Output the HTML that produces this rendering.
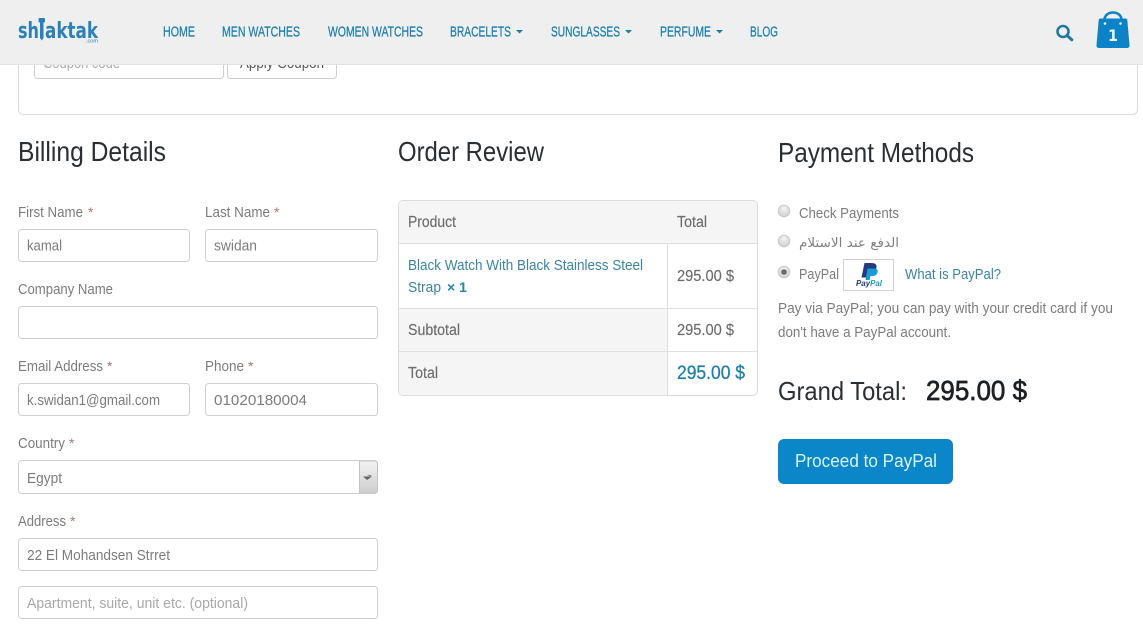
<!DOCTYPE html>
<html lang="en"><head><meta charset="utf-8"><title>Checkout</title>
<style>
html,body{margin:0;padding:0;background:#fff;width:1143px;height:625px;overflow:hidden}
svg{display:block}
text{font-family:"Liberation Sans","DejaVu Sans",sans-serif;fill:#777;font-size:14px}
.nav{fill:#1a7fb0;font-size:14.5px;stroke:#1a7fb0;stroke-width:.25px}
.h{fill:#2a2f33;font-size:28px}
.lab{fill:#7c7c7c;font-size:15px}
.val{fill:#7c7c7c;font-size:15px}
.req{fill:#a77;font-size:14px}
.inp{fill:#fff;stroke:#d0d0d0;stroke-width:1}
.tb{fill:#6c6c6c;font-size:15.500px;stroke:#6c6c6c;stroke-width:.15px}
.ln{stroke:#e0e0e0;stroke-width:1}
.blue{fill:#3a84a6;font-size:15px}
</style></head><body>
<svg width="1143" height="625" viewBox="0 0 1143 625" xmlns="http://www.w3.org/2000/svg">
<defs>
<linearGradient id="sel" x1="0" y1="0" x2="0" y2="1"><stop offset="0" stop-color="#f3f3f3"/><stop offset="1" stop-color="#cdcdcd"/></linearGradient>
<radialGradient id="rad" cx=".5" cy=".3" r=".75"><stop offset="0" stop-color="#f4f4f4"/><stop offset="1" stop-color="#cbcbcb"/></radialGradient>
</defs>
<rect width="1143" height="625" fill="#fff"/>

<!-- coupon panel -->
<rect x="18.500" y="40" width="1119" height="74.500" rx="5" fill="#fff" stroke="#dcdcdc"/>
<rect x="34.500" y="40" width="189" height="38.500" rx="3" class="inp"/>
<rect x="227.500" y="40" width="109" height="38.500" rx="3" class="inp"/>
<text x="43" y="68" textLength="77" lengthAdjust="spacingAndGlyphs" style="fill:#aaa;font-size:15px">Coupon code</text>
<text x="240" y="68" textLength="84" lengthAdjust="spacingAndGlyphs" style="fill:#555;font-size:15px">Apply Coupon</text>

<!-- header -->
<rect width="1143" height="64.500" fill="#efefef"/>
<rect y="64" width="1143" height="1" fill="#e4e4e4"/>
<g style="font-family:'DejaVu Sans',sans-serif">
<text x="18" y="38" textLength="21" lengthAdjust="spacingAndGlyphs" style="fill:#2b80ba;font-size:22px;font-weight:bold;font-family:'DejaVu Sans',sans-serif">sh</text>
<text x="45" y="38" textLength="53" lengthAdjust="spacingAndGlyphs" style="fill:#2b80ba;font-size:22px;font-weight:bold;font-family:'DejaVu Sans',sans-serif">aktak</text>
</g>
<rect x="38.500" y="18" width="6.500" height="4.500" rx="1" fill="#2b80ba"/>
<path d="M40 22.500h3.500V38l-1.700 2.500L40 38z" fill="#2b80ba"/>
<text x="86" y="42.500" textLength="12" lengthAdjust="spacingAndGlyphs" style="fill:#2b80ba;font-size:5px">.com</text>
<text class="nav" x="163" y="36.500" textLength="32" lengthAdjust="spacingAndGlyphs">HOME</text>
<text class="nav" x="222" y="36.500" textLength="78" lengthAdjust="spacingAndGlyphs">MEN WATCHES</text>
<text class="nav" x="328" y="36.500" textLength="95" lengthAdjust="spacingAndGlyphs">WOMEN WATCHES</text>
<text class="nav" x="450" y="36.500" textLength="61" lengthAdjust="spacingAndGlyphs">BRACELETS</text>
<path d="M516 30h7l-3.500 3.500z" fill="#1a7fb0"/>
<text class="nav" x="551" y="36.500" textLength="69" lengthAdjust="spacingAndGlyphs">SUNGLASSES</text>
<path d="M625 30h7l-3.500 3.500z" fill="#1a7fb0"/>
<text class="nav" x="660" y="36.500" textLength="51" lengthAdjust="spacingAndGlyphs">PERFUME</text>
<path d="M716 30h7l-3.500 3.500z" fill="#1a7fb0"/>
<text class="nav" x="750" y="36.500" textLength="28" lengthAdjust="spacingAndGlyphs">BLOG</text>
<circle cx="1063" cy="31.500" r="5.500" fill="none" stroke="#23789f" stroke-width="2.600"/>
<path d="M1067 35.500L1071.800 39.800" stroke="#23789f" stroke-width="3" stroke-linecap="round"/>
<path d="M1100.500 18.500h25q1.600 0 1.800 1.600l2.200 24.900q.2 3-2.800 3h-27.400q-3 0-2.800-3l2.200-24.900q.2-1.600 1.800-1.600z" fill="#0b83c6"/>
<path d="M1104.500 22.500v-2.500c0-10 17-10 17 0v2.500" fill="none" stroke="#0b83c6" stroke-width="2.600"/>
<circle cx="1105" cy="23.500" r="1.300" fill="#e2f4fb"/><circle cx="1120.500" cy="23.500" r="1.300" fill="#e2f4fb"/>
<text x="1108" y="41" textLength="10" lengthAdjust="spacingAndGlyphs" style="fill:#e6f6fc;font-size:16px;font-weight:bold;font-family:'DejaVu Sans',sans-serif">1</text>

<!-- billing -->
<text class="h" x="18" y="161" textLength="148" lengthAdjust="spacingAndGlyphs">Billing Details</text>
<text class="lab" x="18" y="217" textLength="65" lengthAdjust="spacingAndGlyphs">First Name</text><text class="req" x="88" y="217">*</text>
<text class="lab" x="205" y="217" textLength="65" lengthAdjust="spacingAndGlyphs">Last Name</text><text class="req" x="274" y="217">*</text>
<rect x="18.500" y="229.500" width="171" height="32" rx="3" class="inp"/>
<rect x="205.500" y="229.500" width="172" height="32" rx="3" class="inp"/>
<text class="val" x="27" y="250.500" textLength="35" lengthAdjust="spacingAndGlyphs">kamal</text>
<text class="val" x="214" y="250.500" textLength="43" lengthAdjust="spacingAndGlyphs">swidan</text>
<text class="lab" x="18" y="294" textLength="95" lengthAdjust="spacingAndGlyphs">Company Name</text>
<rect x="18.500" y="306.500" width="359" height="32" rx="3" class="inp"/>
<text class="lab" x="18" y="371" textLength="85" lengthAdjust="spacingAndGlyphs">Email Address</text><text class="req" x="107" y="371">*</text>
<text class="lab" x="205" y="371" textLength="39" lengthAdjust="spacingAndGlyphs">Phone</text><text class="req" x="248" y="371">*</text>
<rect x="18.500" y="383.500" width="171" height="32" rx="3" class="inp"/>
<rect x="205.500" y="383.500" width="172" height="32" rx="3" class="inp"/>
<text class="val" x="27" y="405" textLength="133" lengthAdjust="spacingAndGlyphs">k.swidan1@gmail.com</text>
<text class="val" x="214" y="405" textLength="93" lengthAdjust="spacingAndGlyphs">01020180004</text>
<text class="lab" x="18" y="448" textLength="47" lengthAdjust="spacingAndGlyphs">Country</text><text class="req" x="69" y="448">*</text>
<rect x="18.500" y="460.500" width="359" height="33" rx="3" class="inp"/>
<path d="M359.500 461H374.500q3 0 3 3V490q0 3-3 3H359.500z" fill="url(#sel)" stroke="#c4c4c4"/>
<path d="M363 476.500h9l-5 3.500z" fill="#666"/><path d="M367 475h5l-2 1.500z" fill="#888"/>
<text class="val" x="27" y="483" textLength="35" lengthAdjust="spacingAndGlyphs">Egypt</text>
<text class="lab" x="18" y="526" textLength="48" lengthAdjust="spacingAndGlyphs">Address</text><text class="req" x="70" y="526">*</text>
<rect x="18.500" y="538.500" width="359" height="32" rx="3" class="inp"/>
<text class="val" x="27" y="560" textLength="143" lengthAdjust="spacingAndGlyphs">22 El Mohandsen Strret</text>
<rect x="18.500" y="586.500" width="359" height="32" rx="3" class="inp"/>
<text class="val" x="27" y="608" textLength="221" lengthAdjust="spacingAndGlyphs" style="fill:#a8a8a8">Apartment, suite, unit etc. (optional)</text>

<!-- order review -->
<text class="h" x="398" y="161" textLength="146" lengthAdjust="spacingAndGlyphs">Order Review</text>
<rect x="398.500" y="200.500" width="359" height="195" rx="5" fill="#fff" stroke="#dcdcdc"/>
<path d="M399 243.500V205.500q0-4.500 4.500-4.500H752.500q4.500 0 4.500 4.500V243.500z" fill="#f5f5f5"/>
<path d="M399 309H667V395H403.500q-4.500 0-4.500-4.500z" fill="#f5f5f5"/>
<path class="ln" d="M399 243.500H757M399 308.500H757M399 351.500H757M667.500 244V395" fill="none"/>
<text class="tb" x="408" y="227" textLength="48" lengthAdjust="spacingAndGlyphs">Product</text>
<text class="tb" x="677" y="227" textLength="30" lengthAdjust="spacingAndGlyphs">Total</text>
<text class="blue" x="408" y="270" textLength="235" lengthAdjust="spacingAndGlyphs">Black Watch With Black Stainless Steel</text>
<text class="blue" x="408" y="292" textLength="33" lengthAdjust="spacingAndGlyphs">Strap</text>
<text x="447" y="292" textLength="20" lengthAdjust="spacingAndGlyphs" style="fill:#2484ad;font-weight:bold;font-size:14px">× 1</text>
<text class="tb" x="677" y="281" textLength="57" lengthAdjust="spacingAndGlyphs">295.00 $</text>
<text class="tb" x="408" y="335" textLength="52" lengthAdjust="spacingAndGlyphs">Subtotal</text>
<text class="tb" x="677" y="335" textLength="57" lengthAdjust="spacingAndGlyphs">295.00 $</text>
<text class="tb" x="408" y="378" textLength="30" lengthAdjust="spacingAndGlyphs">Total</text>
<text x="677" y="379" textLength="68" lengthAdjust="spacingAndGlyphs" style="fill:#1f80aa;stroke:#1f80aa;stroke-width:.3px;font-size:19px">295.00 $</text>

<!-- payment -->
<text class="h" x="778" y="162" textLength="196" lengthAdjust="spacingAndGlyphs">Payment Methods</text>
<circle cx="784" cy="211" r="5.800" fill="url(#rad)" stroke="#c8c8c8"/>
<circle cx="784" cy="241" r="5.800" fill="url(#rad)" stroke="#c8c8c8"/>
<circle cx="784" cy="272" r="5.800" fill="url(#rad)" stroke="#c8c8c8"/>
<circle cx="784" cy="272" r="2.800" fill="#6a6a6a"/>
<text class="lab" x="799" y="218" textLength="100" lengthAdjust="spacingAndGlyphs">Check Payments</text>
<text x="799" y="247" textLength="100" lengthAdjust="spacingAndGlyphs" style="fill:#808080;font-size:13px;font-family:'DejaVu Sans',sans-serif">الدفع عند الاستلام</text>
<text class="lab" x="799" y="279" textLength="40" lengthAdjust="spacingAndGlyphs">PayPal</text>
<rect x="843.500" y="259.500" width="50" height="31" fill="#fff" stroke="#d2d2d2"/>
<path d="M864.500 263h7q5.500 0 5 4.500t-6 5h-3l-1 5h-5z" fill="#253b80"/>
<path d="M867.500 268.500h7.500q3.500 .5 2.500 4t-5 3.500h-2l-1 4h-4z" fill="#179bd7"/>
<text x="856" y="286" textLength="26" lengthAdjust="spacingAndGlyphs" style="fill:#253b80;font-size:8px;font-weight:bold;font-style:italic">Pay<tspan style="fill:#179bd7">Pal</tspan></text>
<text class="blue" x="905" y="279" textLength="96" lengthAdjust="spacingAndGlyphs">What is PayPal?</text>
<text class="lab" x="778" y="313" textLength="335" lengthAdjust="spacingAndGlyphs">Pay via PayPal; you can pay with your credit card if you</text>
<text class="lab" x="778" y="337" textLength="173" lengthAdjust="spacingAndGlyphs">don't have a PayPal account.</text>
<text x="778" y="400" textLength="129" lengthAdjust="spacingAndGlyphs" style="fill:#2a2f33;font-size:26px">Grand Total:</text>
<text x="926" y="400" textLength="101" lengthAdjust="spacingAndGlyphs" style="fill:#1d2125;stroke:#1d2125;stroke-width:.7px;font-size:28px">295.00 $</text>
<rect x="778" y="439" width="175" height="45" rx="6" fill="#0b86c8"/>
<text x="795" y="467" textLength="142" lengthAdjust="spacingAndGlyphs" style="fill:#d6f4ff;font-size:18.500px">Proceed to PayPal</text>
</svg>
</body></html>
